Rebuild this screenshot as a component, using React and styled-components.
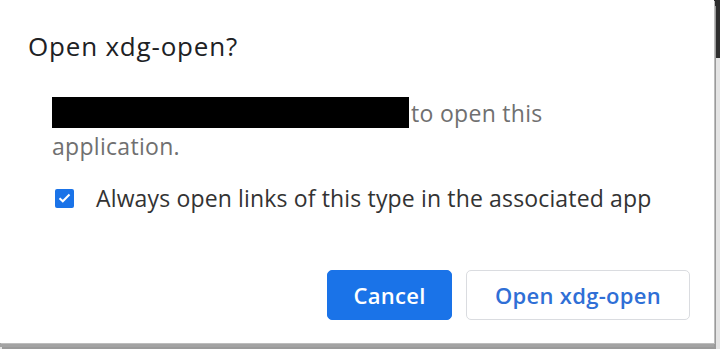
import React, { useState } from "react";
import styled, { createGlobalStyle } from "styled-components";

const GlobalStyle = createGlobalStyle`
  html, body {
    margin: 0;
    padding: 0;
    width: 720px;
    height: 349px;
    overflow: hidden;
    background: linear-gradient(to bottom, #2e2e2e 0, #2e2e2e 58px, #e4e4e4 58px);
    font-family: "Open Sans", "Noto Sans", sans-serif;
  }
`;

const Stage = styled.div`
  width: 720px;
  height: 349px;
  display: flex;
  align-items: flex-start;
`;

const Dialog = styled.div`
  width: 714px;
  height: 343px;
  box-sizing: border-box;
  background: #ffffff;
  box-shadow: 1px 1px 0 #bdbdbd, 0 4px 0 #a3a3a3, 2px 6px 0 #9a9a9a;
  padding: 29px 24px 0 28px;
  display: flex;
  flex-direction: column;
`;

const Title = styled.h1`
  margin: 0;
  font-size: 26px;
  font-weight: 400;
  letter-spacing: 0.8px;
  color: #202124;
  line-height: 34px;
`;

const Body = styled.div`
  margin: 34px 0 0 24px;
  font-size: 23px;
  letter-spacing: 0.3px;
  line-height: 33px;
  color: #707070;
  width: 520px;
`;

const Redacted = styled.span`
  display: inline-block;
  width: 357px;
  height: 31px;
  background: #000;
  vertical-align: top;
  margin-right: 2px;
`;

const CheckRow = styled.label`
  display: flex;
  align-items: center;
  margin: 20px 0 0 27px;
  gap: 22px;
  font-size: 23px;
  letter-spacing: 0.15px;
  line-height: 30px;
  color: #333;
  cursor: pointer;
`;

const Box = styled.span`
  width: 19px;
  height: 19px;
  border-radius: 2px;
  background: ${(p) => (p.checked ? "#1a73e8" : "#fff")};
  border: ${(p) => (p.checked ? "none" : "2px solid #5f6368")};
  display: flex;
  align-items: center;
  justify-content: center;
  flex-shrink: 0;
`;

const Actions = styled.div`
  display: flex;
  justify-content: flex-end;
  gap: 14px;
  margin-top: auto;
  margin-bottom: 23px;
`;

const Button = styled.button`
  height: 50px;
  box-sizing: border-box;
  padding: 0;
  width: ${(p) => p.w}px;
  border-radius: 5px;
  font-family: inherit;
  font-size: 22px;
  font-weight: 600;
  letter-spacing: 0.3px;
  cursor: pointer;
  background: ${(p) => (p.primary ? "#1a73e8" : "#fff")};
  color: ${(p) => (p.primary ? "#fff" : "#2f6fd6")};
  border: 1px solid ${(p) => (p.primary ? "#1a73e8" : "#dadce0")};
`;

const App = () => {
  const [always, setAlways] = useState(true);

  return (
    <>
      <GlobalStyle />
      <Stage>
        <Dialog>
          <Title>Open xdg-open?</Title>
          <Body>
            <Redacted />
            to open this application.
          </Body>
          <CheckRow onClick={() => setAlways(!always)}>
            <Box checked={always}>
              {always && (
                <svg width="13" height="10" viewBox="0 0 13 10">
                  <path d="M1.5 5.2 L4.8 8.3 L11.5 1.5" fill="none" stroke="#fff" strokeWidth="2" />
                </svg>
              )}
            </Box>
            Always open links of this type in the associated app
          </CheckRow>
          <Actions>
            <Button primary w={125}>Cancel</Button>
            <Button w={224}>Open xdg-open</Button>
          </Actions>
        </Dialog>
      </Stage>
    </>
  );
};

export default App;
